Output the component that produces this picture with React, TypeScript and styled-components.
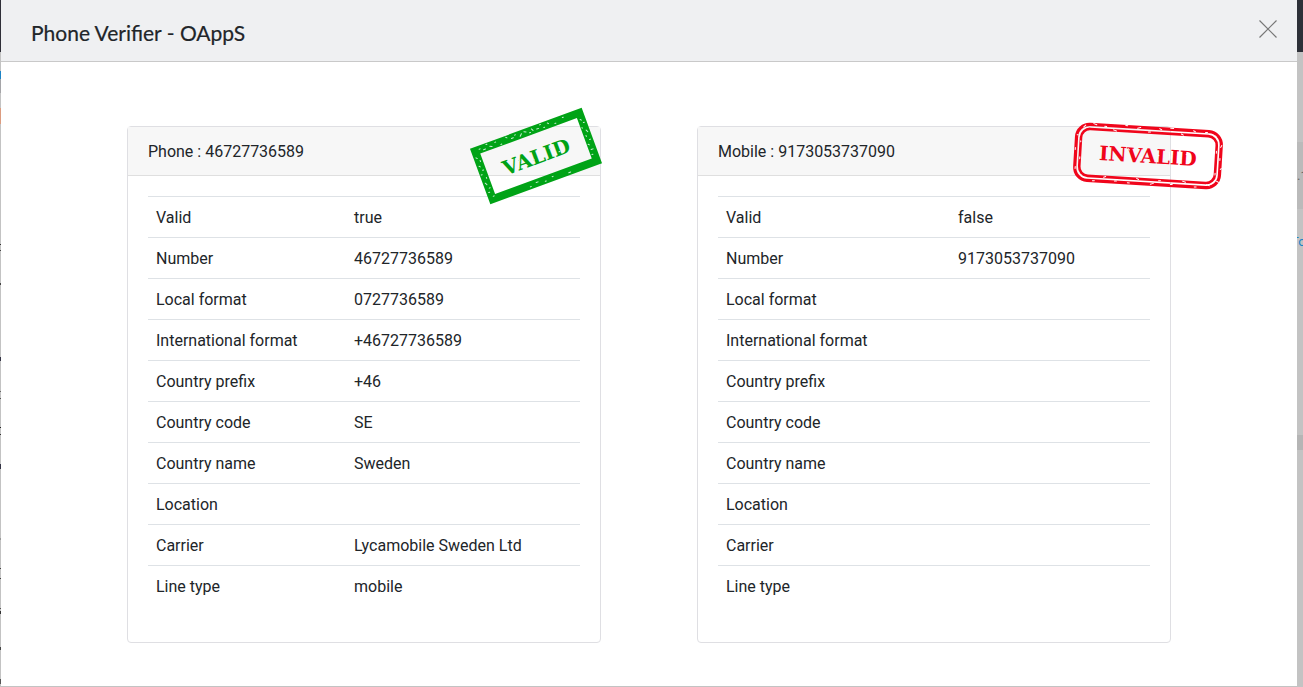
import React from 'react';
import styled, { createGlobalStyle } from 'styled-components';

const GlobalStyle = createGlobalStyle`
  *, *::before, *::after { box-sizing: border-box; }
  body {
    margin: 0;
    background: #c3c3c3;
    color: #212529;
    font-family: Roboto, "Liberation Sans", sans-serif;
    font-size: 16px;
    line-height: 24px;
  }
`;

const Page = styled.div`
  display: grid;
  grid-template-columns: 1px minmax(0, 1fr) 6px;
  min-height: 100vh;
  padding-bottom: 1px;
`;

const LeftEdge = styled.div`
  background: linear-gradient(
    #2f2f38 0 52px, #c3c3c3 52px 71px, #1c84c6 71px 79px, #a5a5a8 79px 93px,
    #c3c3c3 93px 108px, #dc9c80 108px 124px,
    #c3c3c3 124px 244px, #333 244px 245px,
    #c3c3c3 245px 250px, #444 250px 251px,
    #c3c3c3 251px 283px, #444 283px 285px,
    #c3c3c3 285px 357px, #334 357px 361px,
    #c3c3c3 361px 391px, #666 391px 392px,
    #c3c3c3 392px 398px, #555 398px 399px,
    #c3c3c3 399px 427px, #222 427px 428px,
    #c3c3c3 428px 434px, #333 434px 435px,
    #c3c3c3 435px 464px, #334 464px 469px,
    #c3c3c3 469px 538px, #999 538px 540px,
    #c3c3c3 540px 568px, #444 568px 569px,
    #c3c3c3 569px 578px, #444 578px 579px,
    #c3c3c3 579px 608px, #555 608px 609px,
    #c3c3c3 609px 611px, #333 611px 614px,
    #c3c3c3 614px 647px, #444 647px 650px,
    #c3c3c3 650px 679px, #555 679px 684px,
    #c3c3c3 684px
  );
`;

const RightEdge = styled.div`
  overflow: hidden;
  white-space: nowrap;
  font-size: 13px;
`;

const EdgeBand = styled.div<{ $height: number; $fill?: string; $color?: string; $indent?: number }>`
  display: flex;
  align-items: center;
  height: ${p => p.$height}px;
  background: ${p => p.$fill ?? 'transparent'};
  color: ${p => p.$color ?? '#666'};
  text-indent: ${p => p.$indent ?? 0}px;
`;

const Modal = styled.section`
  background: #fff;
`;

const ModalHeader = styled.header`
  display: flex;
  align-items: center;
  justify-content: space-between;
  height: 62px;
  padding: 4px 20px 0 30px;
  background: #eff0f2;
  border-bottom: 1px solid #c9c9c9;
`;

const Title = styled.h1`
  margin: 0;
  font: 400 21px/28px Lato, sans-serif;
  -webkit-text-stroke: 0.2px;
`;

const CloseButton = styled.button`
  display: flex;
  margin: 0 0 8px;
  padding: 0;
  border: 0;
  background: none;
  color: #777;
`;

const Cards = styled.main`
  display: grid;
  grid-template-columns: 1fr 1fr;
  gap: 96px;
  padding: 64px 126px 43px;
`;

const Card = styled.article`
  position: relative;
  border: 1px solid #dfdfe3;
  border-radius: 4px;
`;

const CardHeader = styled.h2`
  margin: 0;
  padding: 13px 20px 11px;
  border-bottom: 1px solid #dfdfdf;
  background: #f7f7f7;
  font-size: 16px;
  font-weight: 400;
`;

const CardBody = styled.div`
  padding: 20px;
`;

const Table = styled.table`
  width: 100%;
  margin-bottom: 16px;
  border-collapse: collapse;
  table-layout: fixed;
`;

const LabelCell = styled.th<{ $width: number }>`
  width: ${p => p.$width}px;
  padding: 9px 8px 7px;
  border-top: 1px solid #dee2e6;
  font-weight: 400;
  text-align: left;
`;

const ValueCell = styled.td`
  padding: 9px 8px 7px;
  border-top: 1px solid #dee2e6;
`;

const Stamp = styled.svg<{ $top: number; $right: number }>`
  position: absolute;
  top: ${p => p.$top}px;
  right: ${p => p.$right}px;
`;

const StampText = styled.text`
  font: 700 20px "DejaVu Serif", serif;
  text-anchor: middle;
`;

const ValidStamp = () => (
  <Stamp $top={-23} $right={-6} width="140" height="104" role="img" aria-label="Valid">
    <g transform="rotate(-20.2 70 52)">
      <rect x="14.5" y="26.5" width="111" height="51" fill="none" stroke="#00a316" strokeWidth="8" />
      <StampText x="70" y="60" fill="#00a316">VALID</StampText>
      <path
        d="M19 26h1M23 28h2M27 24h1M30 27l2 1M36 25h1M41 29h1M48 24l1 1M53 27h2M57 25h1M62 28l2-2M67 25l2 1M72 28h1M75 25l1 2M80 27h2M84 24h1M87 28h1M92 25l1 1M99 28h1M108 25h1M124 33l1 1M127 37h-1M123 41v1M126 45l1 2M124 50v1M127 55h-1M123 59l1 1M126 65h-2M123 70h1M54 79h1M61 77h2M70 79h1M78 77h1M95 79h2M13 33l1 1M16 37v1M13 42l1 1M15 47h1M12 51h1M16 55v1M13 60l1 2M16 66h-1M13 70h1M16 75h1M52 50l1 1M66 55h1M85 49l1 1M93 56h1"
        fill="none" stroke="#c8efd4" strokeLinecap="round" strokeWidth="1"
      />
    </g>
  </Stamp>
);

const InvalidStamp = () => (
  <Stamp $top={-8} $right={-58} width="160" height="74" role="img" aria-label="Invalid">
    <g transform="rotate(3.5 80 37)" fill="none" stroke="#f0051b">
      <rect x="7.500" y="9" width="145" height="56" rx="13" strokeWidth="3.200" />
      <rect x="12" y="13.500" width="136" height="47" rx="9" strokeWidth="2.600" />
      <StampText x="80" y="44" fill="#f0051b" stroke="none">INVALID</StampText>
      <path
        d="M14 12l2-2M24 8l3 1M35 10h2M44 13l3 1M56 8h2M68 10l3-1M79 13h2M90 9l2 1M101 8h3M112 13l2 1M124 9l2 1M136 10h2M146 13l1 1M153 22l-1 2M148 28v2M152 35v2M154 45l-1 1M148 50v2M150 58l2 1M140 62l3 1M128 65h2M116 60l3 1M104 64h2M92 61h2M84 65l3-1M70 60l2 1M61 65h2M48 64h2M37 61l2-1M26 65h2M14 60l1 1M8 52v2M12 42v2M7 33v2M12 26v1M8 20h1M60 31l1 1M73 39h1M90 36h1M101 32l1 6M118 33h1"
        stroke="#fff" strokeLinecap="round" strokeWidth="1"
      />
    </g>
  </Stamp>
);

const labels = [
  'Valid', 'Number', 'Local format', 'International format', 'Country prefix',
  'Country code', 'Country name', 'Location', 'Carrier', 'Line type',
];

const phone = [
  'true', '46727736589', '0727736589', '+46727736589', '+46',
  'SE', 'Sweden', '', 'Lycamobile Sweden Ltd', 'mobile',
];

const mobile = ['false', '9173053737090'];

type ResultProps = { title: string; values: string[]; labelWidth: number; stamp: React.ReactNode };

const ResultCard = ({ title, values, labelWidth, stamp }: ResultProps) => (
  <Card>
    <CardHeader>{title}</CardHeader>
    <CardBody>
      <Table>
        <tbody>
          {labels.map((label, i) => (
            <tr key={label}>
              <LabelCell scope="row" $width={labelWidth}>{label}</LabelCell>
              <ValueCell>{values[i] ?? ''}</ValueCell>
            </tr>
          ))}
        </tbody>
      </Table>
    </CardBody>
    {stamp}
  </Card>
);

export default function App() {
  return (
    <>
      <GlobalStyle />
      <Page>
        <LeftEdge />
        <Modal role="dialog" aria-labelledby="dialog-title">
          <ModalHeader>
            <Title id="dialog-title">Phone Verifier - OAppS</Title>
            <CloseButton type="button" aria-label="Close">
              <svg width="18" height="18" viewBox="0 0 18 18" fill="none" stroke="currentColor" strokeWidth="1.200">
                <path d="M.5.5l17 17M17.500.5l-17 17" />
              </svg>
            </CloseButton>
          </ModalHeader>
          <Cards>
            <ResultCard title="Phone : 46727736589" values={phone} labelWidth={198} stamp={<ValidStamp />} />
            <ResultCard title="Mobile : 9173053737090" values={mobile} labelWidth={232} stamp={<InvalidStamp />} />
          </Cards>
        </Modal>
        <RightEdge>
          <EdgeBand $height={52} $fill="#2d3038" />
          <EdgeBand $height={90} />
          <EdgeBand $height={67} $fill="#bababa">.1</EdgeBand>
          <EdgeBand $height={66} $color="#1c84c6" $indent={-6}>To</EdgeBand>
          <EdgeBand $height={160} />
          <EdgeBand $height={15} $fill="#b5b5b5" />
        </RightEdge>
      </Page>
    </>
  );
}
